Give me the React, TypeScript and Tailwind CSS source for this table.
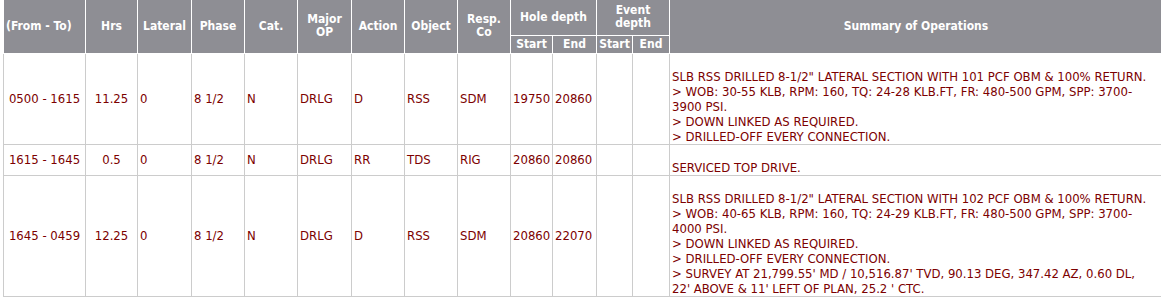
const rows = [
  {
    time: "0500 - 1615",
    hrs: "11.25",
    lateral: "0",
    phase: "8 1/2",
    cat: "N",
    major: "DRLG",
    action: "D",
    object: "RSS",
    resp: "SDM",
    start: "19750",
    end: "20860",
    summary: [
      'SLB RSS DRILLED 8-1/2" LATERAL SECTION WITH 101 PCF OBM & 100% RETURN.',
      "> WOB: 30-55 KLB, RPM: 160, TQ: 24-28 KLB.FT, FR: 480-500 GPM, SPP: 3700-3900 PSI.",
      "> DOWN LINKED AS REQUIRED.",
      "> DRILLED-OFF EVERY CONNECTION.",
    ],
  },
  {
    time: "1615 - 1645",
    hrs: "0.5",
    lateral: "0",
    phase: "8 1/2",
    cat: "N",
    major: "DRLG",
    action: "RR",
    object: "TDS",
    resp: "RIG",
    start: "20860",
    end: "20860",
    summary: ["SERVICED TOP DRIVE."],
  },
  {
    time: "1645 - 0459",
    hrs: "12.25",
    lateral: "0",
    phase: "8 1/2",
    cat: "N",
    major: "DRLG",
    action: "D",
    object: "RSS",
    resp: "SDM",
    start: "20860",
    end: "22070",
    summary: [
      'SLB RSS DRILLED 8-1/2" LATERAL SECTION WITH 102 PCF OBM & 100% RETURN.',
      "> WOB: 40-65 KLB, RPM: 160, TQ: 24-29 KLB.FT, FR: 480-500 GPM, SPP: 3700-4000 PSI.",
      "> DOWN LINKED AS REQUIRED.",
      "> DRILLED-OFF EVERY CONNECTION.",
      "> SURVEY AT 21,799.55' MD / 10,516.87' TVD, 90.13 DEG, 347.42 AZ, 0.60 DL, 22' ABOVE & 11' LEFT OF PLAN, 25.2 ' CTC.",
    ],
  },
];

const th = "border border-white bg-[#8e8e94] text-white text-[12px] font-bold text-center align-middle px-[2px] leading-[13px]";
const td = "border border-[#cccccc] px-[2px] align-middle";

export default function App() {
  return (
    <div className="w-[1161px] h-[297px] overflow-hidden bg-white pl-[3px]">
      <table
        className="table-fixed border-collapse w-[1160px] text-[13px] text-[#7c0000]"
        style={{ fontFamily: '"DejaVu Sans Condensed", "Liberation Sans", sans-serif' }}
      >
        <colgroup>
          <col className="w-[82px]" />
          <col className="w-[52px]" />
          <col className="w-[54px]" />
          <col className="w-[53px]" />
          <col className="w-[53px]" />
          <col className="w-[54px]" />
          <col className="w-[53px]" />
          <col className="w-[53px]" />
          <col className="w-[53px]" />
          <col className="w-[42px]" />
          <col className="w-[44px]" />
          <col className="w-[36px]" />
          <col className="w-[37px]" />
          <col />
        </colgroup>
        <thead>
          <tr className="h-[35px]">
            <th rowSpan={2} className={th + " border-t-0 text-left"}>(From - To)</th>
            <th rowSpan={2} className={th + " border-t-0"}>Hrs</th>
            <th rowSpan={2} className={th + " border-t-0"}>Lateral</th>
            <th rowSpan={2} className={th + " border-t-0"}>Phase</th>
            <th rowSpan={2} className={th + " border-t-0"}>Cat.</th>
            <th rowSpan={2} className={th + " border-t-0"}>Major<br />OP</th>
            <th rowSpan={2} className={th + " border-t-0"}>Action</th>
            <th rowSpan={2} className={th + " border-t-0"}>Object</th>
            <th rowSpan={2} className={th + " border-t-0"}>Resp.<br />Co</th>
            <th colSpan={2} className={th + " border-t-0"}>Hole depth</th>
            <th colSpan={2} className={th + " border-t-0"}>Event<br />depth</th>
            <th rowSpan={2} className={th + " border-t-0"}>Summary of Operations</th>
          </tr>
          <tr className="h-[18px]">
            <th className={th}>Start</th>
            <th className={th}>End</th>
            <th className={th}>Start</th>
            <th className={th}>End</th>
          </tr>
        </thead>
        <tbody className="leading-[15px]">
          {rows.map((r) => (
            <tr key={r.time}>
              <td className={td + " text-center"}>{r.time}</td>
              <td className={td + " text-center"}>{r.hrs}</td>
              <td className={td}>{r.lateral}</td>
              <td className={td}>{r.phase}</td>
              <td className={td}>{r.cat}</td>
              <td className={td}>{r.major}</td>
              <td className={td}>{r.action}</td>
              <td className={td}>{r.object}</td>
              <td className={td}>{r.resp}</td>
              <td className={td}>{r.start}</td>
              <td className={td}>{r.end}</td>
              <td className={td}></td>
              <td className={td}></td>
              <td className={td + " pr-[10px]"}>
                <br />
                {r.summary.map((line, i) => (
                  <div key={i}>{line}</div>
                ))}
              </td>
            </tr>
          ))}
        </tbody>
      </table>
    </div>
  );
}
